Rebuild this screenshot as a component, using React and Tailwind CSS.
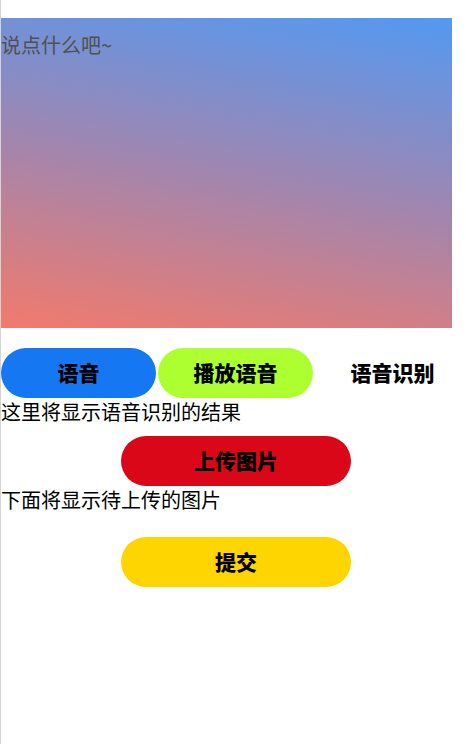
export default function App() {
  const font = { fontFamily: '"Noto Sans CJK SC", "Noto Sans", sans-serif' };
  return (
    <div className="min-h-[744px] w-[466px] overflow-hidden border-l border-[#d4d4d4] bg-white text-black" style={font}>
      <div className="pt-[18px]">
        <textarea
          className="block h-[310px] w-[451px] resize-none border-0 bg-[linear-gradient(10deg,#f27a6c_0%,#a086b0_50%,#5399f2_100%)] pl-0 pt-[13px] text-[20px] leading-[28px] text-[#444] outline-none placeholder:text-[#505050]"
          placeholder="说点什么吧~"
        />
      </div>
      <div className="mt-[20px] flex w-[470px] gap-[2px]">
        <button className="flex h-[50px] w-[155px] items-center justify-center rounded-full bg-[#1677f2] text-[21px] font-black">
          语音
        </button>
        <button className="flex h-[50px] w-[155px] items-center justify-center rounded-full bg-[#adff2f] text-[21px] font-black">
          播放语音
        </button>
        <button className="flex h-[50px] w-[155px] items-center justify-center rounded-full text-[21px] font-black">
          语音识别
        </button>
      </div>
      <div className="text-[20px] leading-[28px]">这里将显示语音识别的结果</div>
      <div className="mt-[10px] flex">
        <button className="ml-[120px] flex h-[50px] w-[230px] items-center justify-center rounded-full bg-[#da0719] text-[21px] font-black">
          上传图片
        </button>
      </div>
      <div className="text-[20px] leading-[28px]">下面将显示待上传的图片</div>
      <div className="mt-[23px] flex">
        <button className="ml-[120px] flex h-[50px] w-[230px] items-center justify-center rounded-full bg-[#ffd500] text-[21px] font-black">
          提交
        </button>
      </div>
    </div>
  );
}
